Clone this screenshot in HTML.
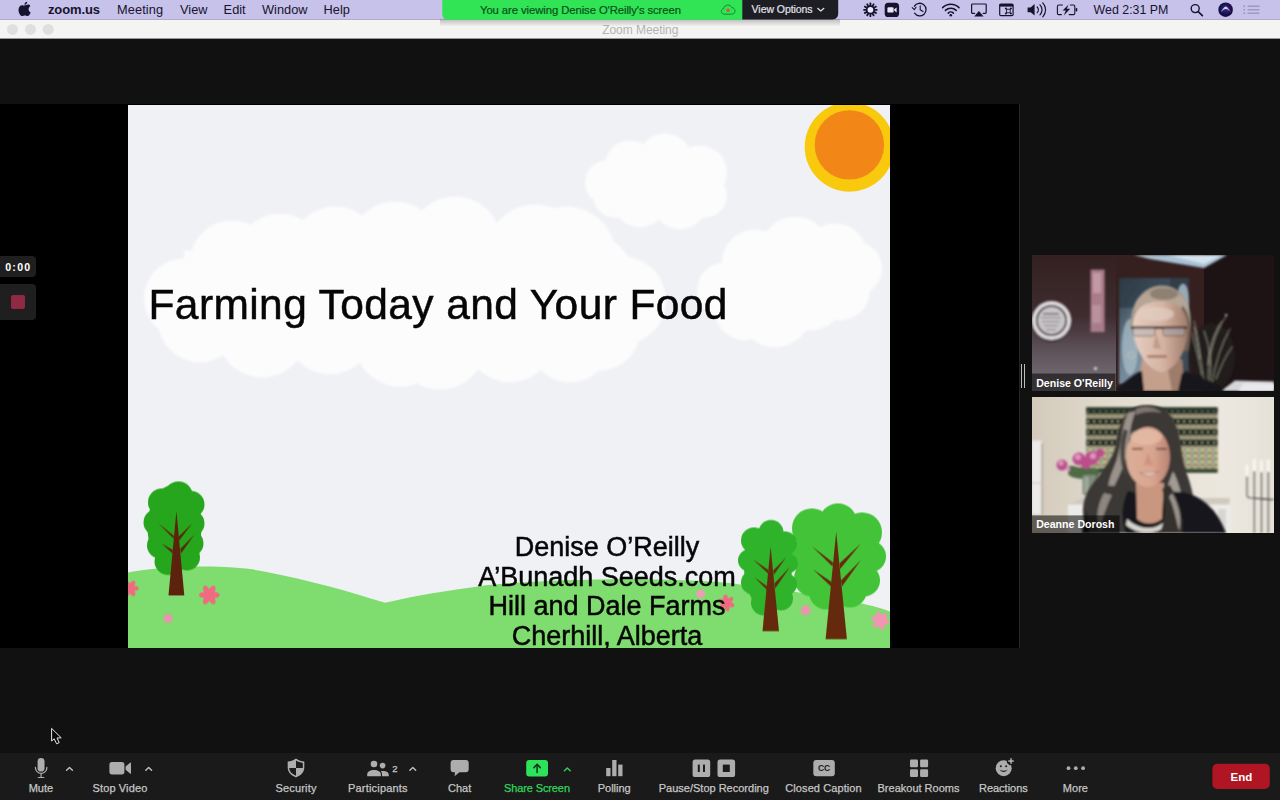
<!DOCTYPE html>
<html>
<head>
<meta charset="utf-8">
<title>Zoom Meeting</title>
<style>
*{box-sizing:border-box;margin:0;padding:0}
html,body{width:1280px;height:800px;overflow:hidden;background:#111111;font-family:"Liberation Sans",sans-serif;}
#root{position:relative;width:1280px;height:800px;background:#111111;overflow:hidden}
.abs{position:absolute}
/* mac menu bar */
#menubar{position:absolute;left:0;top:0;width:1280px;height:20px;background:#c6c0e8;border-bottom:1px solid #aaa4c8}
#menubar .mi{position:absolute;top:0;height:20px;line-height:20px;font-size:13.5px;color:#15122c;white-space:nowrap}
/* title bar */
#titlebar{position:absolute;left:0;top:20px;width:1280px;height:19px;background:#f3f3f3}
#titlebar .tl{position:absolute;top:4px;width:11px;height:11px;border-radius:50%;background:#dddddd}
#titlebar .tt{position:absolute;left:0;width:1280px;text-align:center;top:0;height:19px;line-height:19px;font-size:12.5px;color:#b4b4b4}
/* share banner */
#banner{position:absolute;left:442px;top:0;width:300px;height:20px;background:#2ee05a;border-radius:0 0 0 6px}
#banner .bt{position:absolute;left:0;top:0;width:278px;text-align:center;line-height:19px;font-size:11px;color:#0c4a1c;white-space:nowrap}
#viewopt{position:absolute;left:742px;top:0;width:96px;height:20px;background:#1c1c22;border-radius:0 0 6px 0}
#viewopt .vt{position:absolute;left:9px;top:0;line-height:18px;font-size:11px;color:#e6e6ee;white-space:nowrap}
/* share area */
#share{position:absolute;left:0;top:104px;width:1019px;height:544px;background:#000}
#slide{position:absolute;left:128px;top:0.7px;width:762px;height:543px;background:#eff1f5;overflow:hidden}
#vline{position:absolute;left:1019px;top:104px;width:1px;height:544px;background:#262626}
/* toolbar */
#toolbar{position:absolute;left:0;top:752.8px;width:1280px;height:48px;background:#1a1a1a}
.tb{position:absolute;top:30px;font-size:11px;color:#d0d0d0;white-space:nowrap;transform:translateX(-50%);line-height:12px}
</style>
</head>
<body>
<div id="root">

<!-- TOPBAR -->
<svg class="abs" style="left:0;top:0" width="1280" height="46" viewBox="0 0 1280 46">
  <defs>
    <linearGradient id="bsh" x1="0" y1="0" x2="0" y2="1"><stop offset="0" stop-color="#000" stop-opacity="0.22"/><stop offset="1" stop-color="#000" stop-opacity="0"/></linearGradient>
    <radialGradient id="siri" cx="0.5" cy="0.45" r="0.6"><stop offset="0" stop-color="#3a2a8a"/><stop offset="0.6" stop-color="#1a1250"/><stop offset="1" stop-color="#0e0a30"/></radialGradient>
    <linearGradient id="siri2" x1="0" y1="0" x2="1" y2="0"><stop offset="0" stop-color="#3ad0f0"/><stop offset="0.5" stop-color="#e8f0ff"/><stop offset="1" stop-color="#e04aa0"/></linearGradient>
  </defs>
  <!-- title bar -->
  <rect x="0" y="19" width="1280" height="19.6" fill="#f4f4f3"/>
  <circle cx="12.5" cy="29.4" r="5.5" fill="#dfdfdf"/><circle cx="30.5" cy="29.4" r="5.5" fill="#dfdfdf"/><circle cx="48.2" cy="29.4" r="5.5" fill="#dfdfdf"/>
  <text x="640.3" y="34.1" font-family="Liberation Sans, sans-serif" font-size="12" fill="#b3b3b3" text-anchor="middle" textLength="76.2" lengthAdjust="spacing">Zoom Meeting</text>
  <!-- menubar -->
  <rect x="0" y="0" width="1280" height="19.2" fill="#c7c2e9"/>
  <rect x="0" y="19" width="1280" height="0.9" fill="#a9a4c6"/>
  <!-- banner shadow -->
  <rect x="440" y="19.5" width="400" height="7" fill="url(#bsh)"/>
  <!-- apple -->
  <g fill="#17132e">
    <path d="M24.6,5.6 C25.8,5.6 27.3,4.6 28.4,4.6 C28.9,4.6 30.3,4.8 30.6,6.2 C29.6,6.8 28.9,7.9 28.9,9.2 C28.9,10.8 29.8,12 31,12.5 C30.6,13.6 29.4,16.1 27.8,16.1 C26.9,16.1 26.3,15.5 25.2,15.5 C24.1,15.5 23.4,16.1 22.6,16.1 C20.9,16.1 18.8,12.8 18.8,9.9 C18.8,7 20.6,5.2 22.3,5.2 C23.3,5.2 24,5.6 24.6,5.6 Z" transform="translate(-0.3,0)"/>
    <path d="M24.4,4.8 C24.3,3.4 25.6,1.9 27.2,1.8 C27.4,3.3 26,4.9 24.4,4.8 Z"/>
  </g>
  <g font-family="Liberation Sans, sans-serif" font-size="12.8" fill="#17132e">
    <text x="48" y="14.4" font-weight="bold" font-size="13" textLength="52" lengthAdjust="spacing">zoom.us</text>
    <text x="116.9" y="14.4" textLength="46.2" lengthAdjust="spacing">Meeting</text>
    <text x="180" y="14.4">View</text>
    <text x="223.6" y="14.4">Edit</text>
    <text x="262" y="14.4">Window</text>
    <text x="323.6" y="14.4">Help</text>
    <text x="1093.6" y="14.4" font-size="12.4" textLength="74.8" lengthAdjust="spacing">Wed 2:31 PM</text>
  </g>
  <!-- status icons -->
  <g fill="#17132e" stroke="none">
    <!-- flux/sunburst -->
    <g transform="translate(870.4,9.8)">
      <g id="rays"><rect x="-0.9" y="-7.2" width="1.8" height="14.4" rx="0.6"/><rect x="-0.9" y="-7.2" width="1.8" height="14.4" rx="0.6" transform="rotate(30)"/><rect x="-0.9" y="-7.2" width="1.8" height="14.4" rx="0.6" transform="rotate(60)"/><rect x="-0.9" y="-7.2" width="1.8" height="14.4" rx="0.6" transform="rotate(90)"/><rect x="-0.9" y="-7.2" width="1.8" height="14.4" rx="0.6" transform="rotate(120)"/><rect x="-0.9" y="-7.2" width="1.8" height="14.4" rx="0.6" transform="rotate(150)"/></g>
      <circle r="4.6"/><circle r="2.9" fill="#e9e6f6"/>
    </g>
    <!-- zoom app -->
    <rect x="884.7" y="2.8" width="14.4" height="14.2" rx="3.6"/>
    <rect x="887.4" y="7.2" width="6.2" height="5.4" rx="1.2" fill="#e9e6f6"/>
    <path d="M894.2,9.2 L896.6,7.4 L896.6,12.4 L894.2,10.6 Z" fill="#e9e6f6"/>
  </g>
  <g fill="none" stroke="#17132e" stroke-width="1.3" stroke-linecap="round" stroke-linejoin="round">
    <!-- time machine -->
    <path d="M914.4,6.2 A6.3,6.3 0 1 1 914.6,13.2"/>
    <path d="M920.2,5.8 L920.2,9.8 L923,11.4" stroke-width="1.1"/>
    <path d="M912.2,7.6 L914.3,9.6 L916,7.2" stroke-width="1.1"/>
    <!-- wifi -->
    <path d="M942.6,7.6 A11.5,11.5 0 0 1 959,7.6" stroke-width="1.5"/>
    <path d="M945.4,10.4 A7.6,7.6 0 0 1 956.2,10.4" stroke-width="1.5"/>
    <path d="M948.2,13.1 A3.7,3.7 0 0 1 953.4,13.1" stroke-width="1.5"/>
    <!-- airplay -->
    <path d="M974.6,13.4 L972.4,13.4 Q971.6,13.4 971.6,12.6 L971.6,4.8 Q971.6,4 972.4,4 L985.4,4 Q986.2,4 986.2,4.8 L986.2,12.6 Q986.2,13.4 985.4,13.4 L983.2,13.4" stroke-width="1.2"/>
    <!-- keyboard menu -->
    <rect x="999.7" y="4" width="13.4" height="11.6" rx="1.2" stroke-width="1.2"/>
    <!-- volume arcs -->
    <path d="M1037.2,7 A4,4 0 0 1 1037.2,12.6" stroke-width="1.2"/>
    <path d="M1040,4.8 A7.2,7.2 0 0 1 1040,14.8" stroke-width="1.2"/>
    <path d="M1042.8,2.8 A10.2,10.2 0 0 1 1042.8,16.8" stroke-width="1.2"/>
    <!-- battery -->
    <path d="M1062.4,5 L1058.8,5 Q1057.4,5 1057.4,6.4 L1057.4,13.2 Q1057.4,14.6 1058.8,14.6 L1061.4,14.6" stroke-width="1.1"/>
    <path d="M1070.4,5 L1073.4,5 Q1074.8,5 1074.8,6.4 L1074.8,13.2 Q1074.8,14.6 1073.4,14.6 L1069.2,14.6" stroke-width="1.1"/>
    <!-- search -->
    <circle cx="1195.2" cy="8.6" r="4" stroke-width="1.4"/>
    <path d="M1198.2,11.6 L1202.4,15.6" stroke-width="1.6"/>
  </g>
  <g fill="#17132e">
    <path d="M978.9,16.6 L974.2,16.6 L978.9,11 L983.6,16.6 Z"/>
    <rect x="999.7" y="4" width="13.4" height="2.6"/>
    <rect x="1006.6" y="9.2" width="3.6" height="3.6" fill="none" stroke="#17132e" stroke-width="0.9"/><circle cx="1005.9" cy="8.5" r="1"/><circle cx="1010.9" cy="8.5" r="1"/><circle cx="1005.9" cy="13.5" r="1"/><circle cx="1010.9" cy="13.5" r="1"/><circle cx="950.8" cy="15.3" r="1.3"/>
    <path d="M1027.6,7.4 L1030.6,7.4 L1034.6,4 L1034.6,15.6 L1030.6,12.2 L1027.6,12.2 Z"/>
    <path d="M1068.6,4.4 L1062.6,10.6 L1065.8,10.6 L1063.8,15.4 L1070.2,8.8 L1066.8,8.8 Z"/>
    <rect x="1075.6" y="8" width="1.7" height="3.6" rx="0.8"/>
  </g>
  <!-- siri -->
  <circle cx="1225.6" cy="9.7" r="7.3" fill="url(#siri)"/>
  <path d="M1220.6,12.6 C1222.4,8.6 1224.4,6.6 1225.8,6.4 C1227.2,6.6 1229.2,8.8 1230.8,12.4 C1229,10.2 1227.4,9 1225.8,8.9 C1224.2,9 1222.4,10.4 1220.6,12.6 Z" fill="url(#siri2)" opacity="0.9"/>
  <!-- notification list (dim) -->
  <g fill="#9d98c4">
    <rect x="1247.4" y="5.5" width="12.2" height="1.5" rx="0.7"/><rect x="1247.4" y="9" width="12.2" height="1.5" rx="0.7"/><rect x="1247.4" y="12.5" width="12.2" height="1.5" rx="0.7"/>
    <circle cx="1244.2" cy="6.25" r="0.9"/><circle cx="1244.2" cy="9.75" r="0.9"/><circle cx="1244.2" cy="13.25" r="0.9"/>
  </g>
  <!-- banner -->
  <path d="M442.3,0 L743,0 L743,19.7 L448.3,19.7 Q442.3,19.7 442.3,13.7 Z" fill="#30e455"/>
  <path d="M742.3,0 L838.2,0 L838.2,13.6 Q838.2,19.4 832.4,19.4 L742.3,19.4 Z" fill="#1d1d24"/>
  <text x="580.5" y="13.8" font-family="Liberation Sans, sans-serif" font-size="11.3" fill="#0b4f1c" stroke="#0b4f1c" stroke-width="0.2" text-anchor="middle" textLength="201" lengthAdjust="spacing">You are viewing Denise O'Reilly's screen</text>
  <text x="751.6" y="12.6" font-family="Liberation Sans, sans-serif" font-size="10.5" fill="#e2e2ea" stroke="#e2e2ea" stroke-width="0.2" textLength="61" lengthAdjust="spacing">View Options</text>
  <path d="M817.7,8.3 L820.8,11 L823.9,8.3" fill="none" stroke="#e2e2ea" stroke-width="1.2" stroke-linecap="round" stroke-linejoin="round"/>
  <!-- cloud rec icon -->
  <path d="M724.4,14.2 C722.6,14.2 721.3,13 721.3,11.4 C721.3,10 722.3,8.9 723.6,8.7 C723.8,6.6 725.6,5 727.8,5 C729.6,5 731.1,6 731.8,7.6 C733.7,7.7 735,9.1 735,10.9 C735,12.8 733.6,14.2 731.7,14.2 Z" fill="none" stroke="#168a34" stroke-width="1"/>
  <circle cx="728.1" cy="10.3" r="1.7" fill="#e0503a"/>
</svg>


<!-- SHARE -->
<div id="share">
  <div id="slide">
  <svg class="abs" style="left:0;top:0" width="762" height="543" viewBox="128 104.6 762 543">
  <defs>
    <filter id="soft" x="-5%" y="-5%" width="110%" height="110%"><feGaussianBlur stdDeviation="1.2"/></filter>
    <filter id="soft2" x="-5%" y="-5%" width="110%" height="110%"><feGaussianBlur stdDeviation="0.6"/></filter>
    <g id="flw">
      <ellipse cx="5.2" cy="0" rx="5.2" ry="3"/><ellipse cx="5.2" cy="0" rx="5.2" ry="3" transform="rotate(60)"/><ellipse cx="5.2" cy="0" rx="5.2" ry="3" transform="rotate(120)"/><ellipse cx="5.2" cy="0" rx="5.2" ry="3" transform="rotate(180)"/><ellipse cx="5.2" cy="0" rx="5.2" ry="3" transform="rotate(240)"/><ellipse cx="5.2" cy="0" rx="5.2" ry="3" transform="rotate(300)"/><circle cx="0" cy="0" r="3.6"/>
    </g>
  </defs>
  <rect x="128" y="104" width="762" height="544" fill="#eff1f5"/>
  <!-- clouds -->
  <g fill="#fcfcfd" filter="url(#soft)">
    <!-- big cloud -->
    <circle cx="184" cy="298" r="40"/><circle cx="232" cy="262" r="42"/><circle cx="280" cy="255" r="42"/>
    <circle cx="335" cy="250" r="44"/><circle cx="395" cy="245" r="44"/><circle cx="455" cy="242" r="46"/>
    <circle cx="535" cy="252" r="48"/><circle cx="566" cy="256" r="50"/><circle cx="590" cy="280" r="45"/><circle cx="622" cy="300" r="44"/>
    <circle cx="200" cy="320" r="42"/><circle cx="262" cy="332" r="45"/><circle cx="330" cy="330" r="44"/>
    <circle cx="400" cy="340" r="46"/><circle cx="440" cy="343" r="46"/><circle cx="510" cy="338" r="44"/>
    <circle cx="570" cy="340" r="42"/><circle cx="600" cy="330" r="40"/>
    <rect x="184" y="250" width="438" height="95"/>
    <!-- small cloud -->
    <circle cx="607" cy="182" r="22"/><circle cx="630" cy="165" r="25"/><circle cx="665" cy="160" r="27"/>
    <circle cx="700" cy="172" r="27"/><circle cx="705" cy="195" r="22"/><circle cx="640" cy="200" r="27"/>
    <circle cx="680" cy="202" r="27"/><circle cx="615" cy="195" r="22"/><ellipse cx="656" cy="182" rx="55" ry="35"/>
    <!-- right cloud -->
    <circle cx="725" cy="290" r="28"/><circle cx="755" cy="262" r="33"/><circle cx="795" cy="250" r="34"/>
    <circle cx="835" cy="255" r="32"/><circle cx="855" cy="268" r="27"/><circle cx="840" cy="290" r="30"/>
    <circle cx="775" cy="310" r="37"/><circle cx="745" cy="310" r="30"/><circle cx="810" cy="295" r="35"/>
  </g>
  <!-- sun -->
  <g filter="url(#soft2)">
    <circle cx="849.5" cy="146.5" r="44.8" fill="#f8c90e"/>
    <circle cx="849.4" cy="144.5" r="34.7" fill="#f28617"/>
  </g>
  <!-- hills -->
  <g filter="url(#soft2)">
  <path d="M128,572 C170,565 230,564 264,571 C310,580 350,591 385,602.4 C420,594 450,590 478,586 C540,578 680,576 740,584 C800,592 860,600 890,611 L890,648 L128,648 Z" fill="#7fdc6e"/>
  </g>
  <!-- flowers -->
  <g filter="url(#soft2)">
    <use href="#flw" transform="translate(130,588) scale(0.83)" fill="#f06a80"/>
    <use href="#flw" transform="translate(209.3,594.5) scale(1.0)" fill="#f06a80"/>
    <use href="#flw" transform="translate(168,618) scale(0.5)" fill="#f290b4"/>
    <use href="#flw" transform="translate(700.6,593.4) scale(0.5)" fill="#f29ab8"/>
    <use href="#flw" transform="translate(726.4,602.6) rotate(20) scale(0.8)" fill="#f06a80"/>
    <use href="#flw" transform="translate(805.6,609.8) scale(0.55)" fill="#f290b4"/>
    <use href="#flw" transform="translate(880.4,620) rotate(15) scale(0.9)" fill="#f294b2"/>
  </g>
  <!-- left tree -->
  <g filter="url(#soft2)">
    <g fill="#28a61d">
      <circle cx="178.5" cy="495" r="14"/><circle cx="162" cy="502" r="14"/><circle cx="191" cy="504" r="13.5"/>
      <circle cx="157" cy="522" r="13.5"/><circle cx="191.5" cy="523" r="13"/><circle cx="160" cy="545" r="13"/>
      <circle cx="190.5" cy="543" r="13"/><circle cx="168" cy="561" r="13.5"/><circle cx="187" cy="557" r="13"/>
      <ellipse cx="174.5" cy="527" rx="27" ry="43"/>
    </g>
    <g fill="#5c2407" stroke="none">
      <path d="M176.4,510.5 L184.3,595 L168.5,595 Z"/>
      <path d="M174,538.5 L158.4,523 L173.5,535 Z"/><path d="M172.5,553 L161.8,543.2 L172.8,549.5 Z"/>
      <path d="M178.8,536 L192.2,523 L179.3,540 Z"/><path d="M180.3,548.5 L194.4,534.2 L181,553 Z"/>
    </g>
  </g>
  <g filter="url(#soft2)">
    <!-- tree B (big, lighter) -->
    <g fill="#43c338">
      <circle cx="838" cy="522" r="19"/><circle cx="812" cy="528" r="20"/><circle cx="862" cy="532" r="20"/>
      <circle cx="806" cy="556" r="17"/><circle cx="870" cy="556" r="16"/><circle cx="812" cy="578" r="18"/>
      <circle cx="864" cy="580" r="16"/><circle cx="826" cy="592" r="17"/><circle cx="850" cy="590" r="17"/>
      <ellipse cx="838" cy="556" rx="34" ry="46"/>
    </g>
    <g fill="#652b08">
      <path d="M836.2,531.4 L846.9,638.7 L825.6,638.7 Z"/>
      <path d="M832.5,566 L812,546 L833,562 Z"/><path d="M831,586 L813,569 L831.5,581.5 Z"/>
      <path d="M839.5,563 L860.5,543.5 L840.2,568.5 Z"/><path d="M841,580 L861,559.5 L842,586 Z"/>
    </g>
    <!-- tree A (smaller, darker) -->
    <g fill="#2fb32a">
      <circle cx="771" cy="532" r="12.5"/><circle cx="754" cy="540" r="13"/><circle cx="785" cy="543" r="12"/>
      <circle cx="749" cy="560" r="11"/><circle cx="788" cy="563" r="10"/><circle cx="753" cy="582" r="12"/>
      <circle cx="786" cy="584" r="11"/><circle cx="764" cy="602" r="13"/><circle cx="781" cy="598" r="12"/>
      <ellipse cx="768" cy="567" rx="24" ry="42"/>
    </g>
    <g fill="#652b08">
      <path d="M770.6,546.3 L779,630.7 L762.5,630.7 Z"/>
      <path d="M768,573 L753,559 L768.3,569.5 Z"/><path d="M767,589.5 L754.5,577 L767.3,586 Z"/>
      <path d="M773.3,570 L786,557 L773.8,574.5 Z"/><path d="M774.5,583 L790,566.5 L775.2,588 Z"/>
    </g>
  </g>
  <g font-family="Liberation Sans, sans-serif" fill="#060606" stroke="#060606" stroke-width="0.5">
    <text x="148.5" y="318.5" font-size="42.5" textLength="579" lengthAdjust="spacing">Farming Today and Your Food</text>
    <g font-size="27" text-anchor="middle">
      <text x="607" y="555.6">Denise O’Reilly</text>
      <text x="607" y="585.4">A’Bunadh Seeds.com</text>
      <text x="607" y="615.1">Hill and Dale Farms</text>
      <text x="607" y="644.9">Cherhill, Alberta</text>
    </g>
  </g>
</svg>

  </div>
</div>
<div id="vline"></div>
<!-- RIGHT PANEL TILES -->
<svg class="abs" style="left:1032px;top:255px" width="242" height="136" viewBox="0 0 242 136">
  <defs>
    <clipPath id="c1"><rect x="0" y="0" width="242" height="136"/></clipPath>
    <filter id="b1" x="-10%" y="-10%" width="120%" height="120%"><feGaussianBlur stdDeviation="0.9"/></filter>
    <filter id="b2" x="-20%" y="-20%" width="140%" height="140%"><feGaussianBlur stdDeviation="2.2"/></filter>
    <filter id="b3" x="-30%" y="-30%" width="160%" height="160%"><feGaussianBlur stdDeviation="4"/></filter>
    <linearGradient id="w1" x1="0" y1="0" x2="0" y2="1"><stop offset="0" stop-color="#33201f"/><stop offset="0.45" stop-color="#3f2c30"/><stop offset="0.7" stop-color="#5d5158"/><stop offset="1" stop-color="#7c747b"/></linearGradient>
    <linearGradient id="pt1" x1="0" y1="0" x2="1" y2="1"><stop offset="0" stop-color="#2a3641"/><stop offset="0.35" stop-color="#65798a"/><stop offset="0.7" stop-color="#8ba0ae"/><stop offset="1" stop-color="#485865"/></linearGradient>
    <linearGradient id="sk1" x1="0" y1="0" x2="1" y2="0"><stop offset="0" stop-color="#e6cfc2"/><stop offset="0.55" stop-color="#d5b3a2"/><stop offset="1" stop-color="#a27c6c"/></linearGradient>
  </defs>
  <g clip-path="url(#c1)">
    <rect width="242" height="136" fill="#2a1a1b"/>
    <rect x="0" y="0" width="90" height="136" fill="url(#w1)"/>
    <rect x="84" y="0" width="90" height="136" fill="#35201f"/>
    <rect x="172" y="0" width="70" height="136" fill="#1d1314"/>
    <g filter="url(#b1)">
      <!-- ceiling -->
      <path d="M102,0 L195,0 L172,13 L118,4 Z" fill="#a9c2d3"/>
      <path d="M135,0 L190,0 L172,9 Z" fill="#d3e3ee"/>
      <!-- painting -->
      <rect x="87" y="23" width="70" height="106" fill="url(#pt1)"/>
      <rect x="87" y="23" width="70" height="30" fill="#2e3b47" opacity="0.75"/>
      <rect x="138" y="23" width="19" height="106" fill="#2b3843" opacity="0.7"/>
      <ellipse cx="98" cy="92" rx="8" ry="28" fill="#a9bdc8" opacity="0.75"/><ellipse cx="151" cy="46" rx="6" ry="17" fill="#a9bdc8" opacity="0.85"/>
      <!-- pink strip -->
      <rect x="58.6" y="14.6" width="14" height="62.5" fill="#a97c8a"/>
      <rect x="61" y="18" width="8" height="20" fill="#c8a0aa" opacity="0.8"/>
      <rect x="60" y="50" width="9" height="18" fill="#c39aa6" opacity="0.7"/>
      <!-- plate -->
      <circle cx="19.5" cy="66" r="20.3" fill="#1f1518"/>
      <circle cx="19.5" cy="65.5" r="19.6" fill="#dcd9dc"/>
      <circle cx="19.5" cy="65.5" r="15.6" fill="#4d434b"/>
      <circle cx="19.5" cy="65.5" r="13.6" fill="#c9c6c9"/>
      <rect x="11" y="58" width="16" height="1.6" fill="#6b656b"/><rect x="9" y="62" width="20" height="1.2" fill="#8b858b"/><rect x="10" y="66" width="18" height="1.2" fill="#8b858b"/><rect x="12" y="70" width="14" height="1.2" fill="#8b858b"/><rect x="14" y="74" width="10" height="1.2" fill="#8b858b"/>
      <circle cx="63.5" cy="113.5" r="1.6" fill="#e8e4e8"/>
    </g>
    <!-- plant -->
    <g filter="url(#b1)">
      <ellipse cx="180" cy="102" rx="23" ry="34" fill="#241d1c"/>
      <g stroke="#6f7466" stroke-width="1.2" fill="none" stroke-linecap="round">
        <path d="M172,128 C168,100 166,80 162,66"/><path d="M176,128 C176,100 182,78 195,60"/><path d="M180,128 C184,104 190,88 198,74"/>
        <path d="M170,120 C166,100 162,88 160,78"/><path d="M184,124 C190,108 194,100 200,92"/><path d="M178,126 C180,110 178,92 172,76"/>
      </g>
      <g stroke="#a9ad9b" stroke-width="0.8" fill="none" stroke-linecap="round"><path d="M176,110 C177,94 182,78 190,66"/><path d="M168,104 C166,92 164,82 162,72"/><circle cx="194" cy="60" r="1.1" fill="#c8ccc0" stroke="none"/></g>
    </g>
    <!-- white bottom right -->
    <path d="M189,136 L203,125.6 L242,126.4 L242,136 Z" fill="#d6d6db" filter="url(#b1)"/><path d="M206,136 L212,128.5 L242,129 L242,136 Z" fill="#e9e9ed" filter="url(#b1)"/>
    <!-- person -->
    <g filter="url(#b1)">
      <!-- hair -->
      <path d="M99,78 C96,52 108,31 130,30.5 C152,31 162,52 158,80 C152,60 146,50 128,50 C112,50 104,60 99,78 Z" fill="#a8998a"/><ellipse cx="129" cy="52" rx="26" ry="17" fill="#b5a595"/>
      <ellipse cx="132" cy="39" rx="14" ry="6" fill="#8f8172"/>
      <path d="M150,50 C160,60 160,80 156,96 L146,96 Z" fill="#6d5f55"/>
      <!-- clothing -->
      <path d="M84,136 C92,126 104,118 112,114 L152,116 C170,122 186,130 192,136 Z" fill="#17131a"/>
      <!-- neck -->
      <path d="M110,104 L150,104 L153,136 L106,136 Z" fill="#c49f8c"/>
      <path d="M134,104 L150,104 L153,136 L140,136 Z" fill="#8e6c5e" opacity="0.7"/>
      <path d="M84,136 C92,126 104,119 110,116 L112,136 Z" fill="#17131a"/>
      <path d="M150,118 C168,123 184,130 192,136 L146,136 Z" fill="#17131a"/>
      <!-- face -->
      <path d="M101,74 C100,54 112,46.5 128,46.5 C146,46.5 156,55 155.5,75 C155,94 146,113 130,117.5 C114,114 102,94 101,74 Z" fill="url(#sk1)"/>
      <ellipse cx="125" cy="59" rx="17" ry="7" fill="#e3cfc2" opacity="0.7"/>
      <!-- glasses -->
      <rect x="99" y="71.5" width="56" height="2.4" rx="1" fill="#3b2826"/>
      <rect x="101" y="72" width="22" height="9" rx="2.5" fill="#b9b5b8" opacity="0.55" stroke="#4b3430" stroke-width="1"/>
      <rect x="131" y="72" width="22" height="9" rx="2.5" fill="#9f9fa8" opacity="0.55" stroke="#4b3430" stroke-width="1"/>
      <!-- nose/mouth -->
      <path d="M124,78 L121,93 L129,94 Z" fill="#b88f7e" opacity="0.7"/>
      <rect x="115" y="100.5" width="20" height="2" rx="1" fill="#9c6558"/>
      <circle cx="99" cy="100" r="3.2" fill="none" stroke="#c9c2bc" stroke-width="0.9"/>
    </g>
    <!-- label -->
    <rect x="0" y="118.5" width="83.5" height="17.5" fill="#000" opacity="0.55"/>
    <text x="4.2" y="131.6" font-family="Liberation Sans, sans-serif" font-weight="bold" font-size="10.6" fill="#fff">Denise O'Reilly</text>
  </g>
</svg>
<svg class="abs" style="left:1032px;top:396.5px" width="242" height="136" viewBox="0 0 242 136">
  <defs>
    <clipPath id="c2"><rect x="0" y="0" width="242" height="136"/></clipPath>
    <linearGradient id="w2" x1="0" y1="0" x2="1" y2="0"><stop offset="0" stop-color="#d3cabb"/><stop offset="0.35" stop-color="#e2dccf"/><stop offset="0.8" stop-color="#ece8df"/><stop offset="1" stop-color="#e6e1d8"/></linearGradient>
    <linearGradient id="sk2" x1="0" y1="0" x2="1" y2="0"><stop offset="0" stop-color="#dcae98"/><stop offset="0.6" stop-color="#d9a590"/><stop offset="1" stop-color="#b98472"/></linearGradient>
    <pattern id="tp" x="0" y="0" width="6" height="10.6" patternUnits="userSpaceOnUse">
      <rect x="0" y="0" width="6" height="10.6" fill="#b3ae90"/>
      <rect x="0" y="0" width="6" height="6.6" fill="#1f2b22"/>
      <rect x="1.2" y="2.4" width="1.8" height="1.8" fill="#bfb596"/>
      <rect x="0.5" y="7.6" width="2.2" height="1.6" fill="#5f7a52"/><rect x="3.6" y="7.8" width="1.6" height="1.4" fill="#a8503c"/>
    </pattern>
    <pattern id="tp2" x="0" y="0" width="7" height="6" patternUnits="userSpaceOnUse">
      <rect x="0" y="0" width="7" height="6" fill="#b3b897"/>
      <rect x="0.5" y="1" width="2.2" height="1.8" fill="#3d6a4a"/><rect x="3.6" y="1" width="2" height="1.8" fill="#b5493f"/>
      <rect x="2" y="3.8" width="2" height="1.6" fill="#d1b04a"/><rect x="5" y="3.8" width="1.6" height="1.6" fill="#3a5a8a"/>
    </pattern>
  </defs>
  <g clip-path="url(#c2)">
    <rect width="242" height="136" fill="url(#w2)"/>
    <g filter="url(#b1)">
      <!-- tapestry -->
      <rect x="54.3" y="10.4" width="131.2" height="65.4" fill="#8f977a"/>
      <rect x="54.3" y="10.4" width="131.2" height="40" fill="url(#tp)"/>
      <rect x="54.3" y="50" width="131.2" height="22" fill="url(#tp2)"/>
      <rect x="54.3" y="10.4" width="131.2" height="3.6" fill="#27342a"/>
      <rect x="54.3" y="71.5" width="131.2" height="4.3" fill="#3d4a34"/>
      <!-- cabinet left -->
      <rect x="0" y="43.5" width="9.5" height="74" fill="#ecebea"/>
      <rect x="9" y="46" width="2.2" height="72" fill="#b9b3a8"/>
      <rect x="0" y="85.5" width="9.5" height="1" fill="#c9c6c0"/>
      <!-- table -->
      <path d="M36,108 L50,101 L198,101 L197,108 Z" fill="#cfc9be"/>
      <rect x="36" y="107.5" width="162" height="29" fill="#ecebe9"/>
      <rect x="186" y="112" width="8" height="24" fill="#d8d6d2"/>
      <!-- candelabra -->
      <g stroke="#55524e" stroke-width="1.1" fill="none">
        <path d="M215,79 L215,98 Q215,101 219,101 L240,103"/><path d="M222.3,74 L222.3,136"/><path d="M229.5,75 L229.5,136"/><path d="M236.3,75 L236.3,136"/><path d="M222,101 L242,102.5"/>
      </g>
      <g fill="#fbf8f0"><rect x="213.6" y="67.5" width="2.6" height="11.5"/><rect x="221" y="62" width="2.6" height="11.5"/><rect x="228.2" y="63.5" width="2.4" height="11"/><rect x="235" y="62.5" width="2.6" height="11.5"/></g>
      <!-- flowers -->
      <g fill="#4f6b45"><ellipse cx="52" cy="76" rx="16" ry="6"/><ellipse cx="44" cy="74" rx="9" ry="4" transform="rotate(25 44 74)"/><ellipse cx="60" cy="80" rx="6" ry="9"/></g>
      <rect x="50.5" y="78" width="14" height="20" rx="2" fill="#7f8c7b"/>
      <rect x="52.5" y="80" width="4" height="16" fill="#a8b2a4" opacity="0.8"/>
      <g fill="#bb4f8c"><circle cx="30" cy="68" r="5.5"/><circle cx="47" cy="62" r="6.5"/><circle cx="60" cy="61" r="7"/><circle cx="68" cy="56" r="4.5"/><circle cx="54" cy="67" r="5"/></g>
      <g fill="#dd94bd"><circle cx="29" cy="66" r="2.6"/><circle cx="46" cy="60" r="3"/><circle cx="61" cy="59" r="3"/><circle cx="36" cy="72" r="2.2"/></g>
    </g>
    <!-- person -->
    <g filter="url(#b1)">
      <!-- hair back -->
      <path d="M114,8 C92,8 86,30 84,48 C80,66 64,80 56,94 C48,108 50,126 58,136 L160,136 C166,118 162,98 156,80 C148,60 150,38 141,22 C134,10 124,8 114,8 Z" fill="#3b3735"/>
      <!-- silver streaks -->
      <path d="M96,16 C88,32 90,52 82,70 C76,84 74,96 76,104 C82,88 92,72 95,56 C98,40 98,26 104,14 Z" fill="#9a928b"/>
      <path d="M141,74 C150,92 154,112 148,130 C144,118 142,100 136,88 Z" fill="#a39b94"/>
      <path d="M104,12 C112,8 124,10 130,16 C122,14 112,14 104,18 Z" fill="#7d7671"/>
      <!-- top (clothing) -->
      <path d="M50,136 C52,112 62,96 80,90 L104,96 L132,96 C158,90 182,104 194,136 Z" fill="#19191c"/>
      <!-- neck -->
      <path d="M104,86 L132,86 L130,122 C122,128 112,128 105,122 Z" fill="#c99680"/>
      <path d="M95,122 C108,134 126,134 134,122 L136,128 C124,138 106,138 94,128 Z" fill="#d9d6d0"/>
      <!-- face -->
      <ellipse cx="116" cy="60" rx="22" ry="30" fill="url(#sk2)"/>
      <ellipse cx="114" cy="40" rx="16" ry="8" fill="#e5bca6" opacity="0.8"/>
      <!-- hair front over face edges -->
      <path d="M96,34 C92,48 92,64 94,80 C88,70 86,50 92,32 Z" fill="#4a4542"/>
      <path d="M134,30 C140,44 140,62 138,80 C146,66 146,46 138,28 Z" fill="#3b3735"/>
      <!-- features -->
      <rect x="100" y="51" width="11" height="1.4" rx="0.7" fill="#5a3a34"/><rect x="124" y="51" width="11" height="1.4" rx="0.7" fill="#5a3a34"/>
      <path d="M116,56 L112,68 L121,68 Z" fill="#c48d78" opacity="0.7"/>
      <path d="M107,75 C112,80 122,80 127,74 C121,77 113,77 107,75 Z" fill="#8c4a44"/>
      <path d="M109,76 C114,79 120,79 125,75.5 C120,76.8 114,77 109,76 Z" fill="#f3ece6"/>
      <!-- hair strands in front of top -->
      <path d="M66,88 C54,104 52,122 58,136 L94,136 C88,120 90,104 98,90 Z" fill="#3b3735"/><path d="M72,96 C64,110 64,124 68,134 C70,122 74,110 80,98 Z" fill="#8d857e"/>
      <path d="M138,88 C148,104 152,122 150,136 L128,136 C134,120 134,104 130,92 Z" fill="#36322f"/>
      <path d="M140,96 C148,110 150,124 147,134 C144,122 142,110 137,100 Z" fill="#9a928b"/>
    </g>
    <!-- label -->
    <rect x="0" y="118.4" width="87.5" height="17.6" fill="#000" opacity="0.55"/>
    <text x="4.2" y="131.4" font-family="Liberation Sans, sans-serif" font-weight="bold" font-size="10.6" fill="#fff">Deanne Dorosh</text>
  </g>
</svg>
<!-- divider handle -->
<div class="abs" style="left:1021px;top:364px;width:1.3px;height:24px;background:#bdbdbd"></div>
<div class="abs" style="left:1023.6px;top:364px;width:1.3px;height:24px;background:#bdbdbd"></div>



<!-- recording widget -->
<div class="abs" style="left:0;top:256px;width:35.5px;height:21px;background:#1f1f1f;border-radius:0 4px 4px 0"></div>
<div class="abs" style="left:0;top:284px;width:35.5px;height:35.5px;background:#1f1f1f;border-radius:0 4px 4px 0"></div>
<div class="abs" style="left:10.8px;top:295px;width:14.4px;height:14.2px;background:#8f2944;border-radius:2px"></div>
<svg class="abs" style="left:0;top:256px" width="40" height="22" viewBox="0 256 40 22">
  <text x="5.2" y="270.6" font-family="Liberation Sans, sans-serif" font-size="10.6" font-weight="bold" fill="#fff" textLength="25" lengthAdjust="spacing">0:00</text>
</svg>
<!-- cursor -->
<svg class="abs" style="left:45px;top:722px" width="24" height="28" viewBox="45 722 24 28">
  <path d="M51.6,728.4 L51.6,741 L54.2,738.8 L56.6,743.8 L59.2,742.6 L57,738 L61.2,737.8 Z" fill="#0a0a0a" stroke="#e8e8e8" stroke-width="1" stroke-linejoin="round"/>
</svg>

<!-- TOOLBAR -->
<div id="toolbar"></div>
<svg class="abs" style="left:0;top:752px" width="1280" height="48" viewBox="0 752 1280 48">
  
  <g fill="#adadad">
    <!-- mic -->
    <rect x="37.6" y="758" width="6.9" height="13.6" rx="3.45"/>
    <path d="M35.4,767.4 A5.75,5.9 0 0 0 46.9,767.4" fill="none" stroke="#adadad" stroke-width="1.25" stroke-linecap="round"/>
    <rect x="40.5" y="773.8" width="1.2" height="3.4"/>
    <rect x="37.7" y="776.9" width="6.8" height="1.2" rx="0.6"/>
    <!-- camera -->
    <rect x="109.4" y="762" width="15" height="12.4" rx="2.6"/>
    <path d="M125.6,766.6 L130,762.8 Q131,762.2 131,763.4 L131,773 Q131,774.2 130,773.6 L125.6,769.8 Z"/>
    <!-- shield -->
    <path d="M296,758.6 C298.6,760.6 301.4,761.4 304.3,761.5 L304.3,767.6 C304.3,772.4 300.8,775.6 296,777.4 C291.2,775.6 287.7,772.4 287.7,767.6 L287.7,761.5 C290.6,761.4 293.4,760.6 296,758.6 Z"/>
    <!-- participants -->
    <circle cx="374" cy="764" r="3.3"/>
    <path d="M367.2,776.3 L367.2,774.6 C367.2,771.6 370.2,770 374,770 C377.8,770 380.9,771.6 380.9,774.6 L380.9,776.3 Z"/>
    <circle cx="382.6" cy="765.6" r="2.8"/>
    <path d="M382,776.3 L382,774.4 C382,773 381.5,772 380.8,771.3 C381.4,771.1 382,771 382.8,771 C386.2,771 388.8,772.4 388.8,775 L388.8,776.3 Z"/>
    <!-- chat -->
    <path d="M453.6,760 L465.7,760 Q468.7,760 468.7,763 L468.7,769.3 Q468.7,772.3 465.7,772.3 L459.4,772.3 L454.6,776.2 L455,772.3 L453.6,772.3 Q450.6,772.3 450.6,769.3 L450.6,763 Q450.6,760 453.6,760 Z"/>
    <!-- polling -->
    <rect x="606.2" y="768" width="4.3" height="8.2"/><rect x="612.2" y="760" width="4.3" height="16.2"/><rect x="618.2" y="764.6" width="4.3" height="11.6"/>
    <!-- pause/stop -->
    <rect x="692.6" y="759.5" width="17.6" height="17.6" rx="2.6"/>
    <rect x="717.5" y="759.5" width="17.6" height="17.6" rx="2.6"/>
    <!-- cc -->
    <rect x="813.3" y="760" width="21.5" height="16.2" rx="3"/>
    <!-- breakout -->
    <rect x="910" y="759.5" width="8" height="7.8" rx="1.2"/><rect x="920.1" y="759.5" width="8" height="7.8" rx="1.2"/>
    <rect x="910" y="769.2" width="8" height="7.8" rx="1.2"/><rect x="920.1" y="769.2" width="8" height="7.8" rx="1.2"/>
    <!-- reactions -->
    <circle cx="1003.7" cy="768.2" r="8"/>
    <!-- more -->
    <circle cx="1068.5" cy="768.2" r="1.9"/><circle cx="1075.8" cy="768.2" r="1.9"/><circle cx="1083.1" cy="768.2" r="1.9"/>
  </g>
  <!-- dark details -->
  <g fill="#1b1b1b">
    <!-- shield quarters -->
    <path d="M296,760.6 C298.2,762 300.4,762.7 302.8,762.9 L302.8,768 L296,768 Z"/>
    <path d="M296,768 L296,775.7 C292.2,774.2 289.3,771.6 289.2,768 Z"/>
    <!-- pause bars -->
    <rect x="697.8" y="764.6" width="2" height="7.4"/><rect x="703" y="764.6" width="2" height="7.4"/>
    <!-- stop square -->
    <rect x="722.8" y="764.6" width="7" height="7.4"/>
    <!-- reactions face -->
    <circle cx="1011" cy="761" r="4.3"/>
    <circle cx="1000.8" cy="766.2" r="1"/><circle cx="1006.2" cy="766.2" r="1"/>
    <path d="M999.4,769.6 Q1003.6,774.6 1007.8,769.6 Q1003.6,772 999.4,769.6 Z"/>
  </g>
  <!-- reactions plus -->
  <g fill="#c4c4c4"><rect x="1010.4" y="758.2" width="1.3" height="5.6"/><rect x="1008.2" y="760.4" width="5.6" height="1.3"/></g>
  <!-- carets -->
  <g fill="none" stroke="#c2c2c2" stroke-width="1.4" stroke-linecap="round" stroke-linejoin="round">
    <path d="M66.6,770.3 L69.5,767.5 L72.4,770.3"/>
    <path d="M145.8,770.3 L148.7,767.5 L151.6,770.3"/>
    <path d="M409.9,770.3 L412.8,767.5 L415.7,770.3"/>
  </g>
  <path d="M564.4,770.8 L567.3,768 L570.2,770.8" fill="none" stroke="#2fd65a" stroke-width="1.4" stroke-linecap="round" stroke-linejoin="round"/>
  <!-- share screen -->
  <rect x="526.2" y="760" width="21.8" height="16.6" rx="3" fill="#2fe25c"/>
  <g fill="none" stroke="#10331a" stroke-width="1.5" stroke-linecap="round" stroke-linejoin="round"><path d="M537.1,772.6 L537.1,764.6"/><path d="M533.9,767.6 L537.1,764.4 L540.3,767.6"/></g>
  <!-- text -->
  <g font-family="Liberation Sans, sans-serif" font-size="11" fill="#c6c6c6" stroke="#c6c6c6" stroke-width="0.25" text-anchor="middle">
    <text x="40.9" y="791.9">Mute</text>
    <text x="119.9" y="791.9" textLength="54.7" lengthAdjust="spacing">Stop Video</text>
    <text x="296" y="791.9" textLength="40.9" lengthAdjust="spacing">Security</text>
    <text x="377.8" y="791.9" textLength="59.5" lengthAdjust="spacing">Participants</text>
    <text x="459.6" y="791.9">Chat</text>
    <text x="537" y="791.9" textLength="66" lengthAdjust="spacing" fill="#2fd65a" stroke="#2fd65a">Share Screen</text>
    <text x="614.2" y="791.9">Polling</text>
    <text x="713.8" y="791.9">Pause/Stop Recording</text>
    <text x="823.5" y="791.9" textLength="76.4" lengthAdjust="spacing">Closed Caption</text>
    <text x="918.5" y="791.9">Breakout Rooms</text>
    <text x="1003.4" y="791.9">Reactions</text>
    <text x="1075.4" y="791.9">More</text>
    <text x="395" y="771.8" font-size="9.6" text-anchor="middle">2</text>
    <text x="824.1" y="771.4" font-size="8.6" font-weight="bold" fill="#1b1b1b" stroke="none">CC</text>
  </g>
  <!-- End -->
  <rect x="1212.4" y="763.7" width="57.4" height="25.3" rx="5" fill="#b01524"/>
  <text x="1241.4" y="780.5" font-family="Liberation Sans, sans-serif" font-size="11.5" font-weight="bold" fill="#fff" text-anchor="middle">End</text>
</svg>


</div>
</body>
</html>
